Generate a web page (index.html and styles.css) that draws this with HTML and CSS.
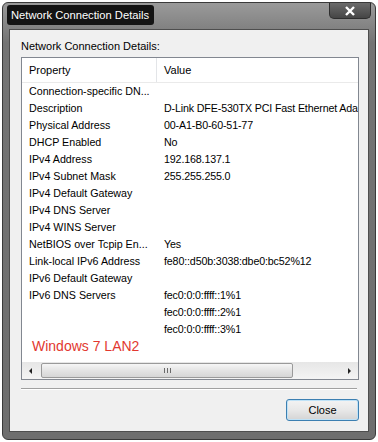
FILE: index.html
```html
<!DOCTYPE html>
<html>
    <head>
        <title>Network Connection Details</title>
        <meta charset="utf-8">
        <link rel="stylesheet" href="styles.css">
    </head>
    <body>
        <div class="window">
            <div class="titlebar">
                <div class="caption">Network Connection Details</div>
                <div class="close-x">
                    <svg width="12" height="10" viewBox="0 0 12 10">
                        <path d="M2 1 L10 9 M10 1 L2 9" stroke="#ffffff" stroke-width="2.4" fill="none"/>
                    </svg>
                </div>
            </div>
            <div class="client">
                <div class="label">Network Connection Details:</div>
                <div class="list">
                    <div class="header">
                        <div class="col-prop">Property</div>
                        <div class="col-val">Value</div>
                    </div>
                    <div class="rows">
                        <div class="row"><div class="col-prop">Connection-specific DN...</div><div class="col-val"></div></div>
                        <div class="row"><div class="col-prop">Description</div><div class="col-val">D-Link DFE-530TX PCI Fast Ethernet Ada</div></div>
                        <div class="row"><div class="col-prop">Physical Address</div><div class="col-val">00-A1-B0-60-51-77</div></div>
                        <div class="row"><div class="col-prop">DHCP Enabled</div><div class="col-val">No</div></div>
                        <div class="row"><div class="col-prop">IPv4 Address</div><div class="col-val">192.168.137.1</div></div>
                        <div class="row"><div class="col-prop">IPv4 Subnet Mask</div><div class="col-val">255.255.255.0</div></div>
                        <div class="row"><div class="col-prop">IPv4 Default Gateway</div><div class="col-val"></div></div>
                        <div class="row"><div class="col-prop">IPv4 DNS Server</div><div class="col-val"></div></div>
                        <div class="row"><div class="col-prop">IPv4 WINS Server</div><div class="col-val"></div></div>
                        <div class="row"><div class="col-prop">NetBIOS over Tcpip En...</div><div class="col-val">Yes</div></div>
                        <div class="row"><div class="col-prop">Link-local IPv6 Address</div><div class="col-val">fe80::d50b:3038:dbe0:bc52%12</div></div>
                        <div class="row"><div class="col-prop">IPv6 Default Gateway</div><div class="col-val"></div></div>
                        <div class="row"><div class="col-prop">IPv6 DNS Servers</div><div class="col-val">fec0:0:0:ffff::1%1</div></div>
                        <div class="row"><div class="col-prop"></div><div class="col-val">fec0:0:0:ffff::2%1</div></div>
                        <div class="row"><div class="col-prop"></div><div class="col-val">fec0:0:0:ffff::3%1</div></div>
                        <div class="row note">Windows 7 LAN2</div>
                    </div>
                    <div class="hscroll">
                        <div class="arrow"><span class="tri-left"></span></div>
                        <div class="track">
                            <div class="thumb"><span class="grip"></span></div>
                        </div>
                        <div class="arrow"><span class="tri-right"></span></div>
                    </div>
                </div>
                <div class="separator"></div>
                <div class="buttons">
                    <div class="btn">Close</div>
                </div>
            </div>
        </div>
    </body>
</html>
```

FILE: styles.css
```css
body{
    margin: 0px;
    padding: 0px;
    background: #ffffff;
    font-family: "Liberation Sans", Arial, sans-serif;
    font-size: 11px;
    color: #000000;
}
.window{
    margin: 2px;
    width: 372px;
    height: 436px;
    border: 1px solid #3a3a3a;
    border-radius: 6px;
    background: linear-gradient(#9a9a9a, #747474 40px, #6e6e6e);
    display: flex;
    flex-direction: column;
}
.titlebar{
    height: 26px;
    display: flex;
    justify-content: space-between;
    align-items: flex-start;
    padding: 0 4px 0 4px;
}
.titlebar .caption{
    margin-top: 2px;
    height: 20px;
    line-height: 20px;
    padding: 0 5px 0 4px;
    background: #141414;
    color: #ffffff;
    font-size: 11.2px;
    border-radius: 3px;
}
.titlebar .close-x{
    width: 40px;
    height: 15px;
    border: 1px solid #2e2e2e;
    border-top: none;
    border-radius: 0 0 5px 5px;
    background: linear-gradient(#6c6c6c, #454545);
    display: flex;
    justify-content: center;
    align-items: center;
}
.client{
    margin: 0 6px 7px 6px;
    flex: 1;
    background: #f0f0f0;
    border: 1px solid #4e4e4e;
    padding: 8px 10px 0 11px;
}
.label{
    line-height: 17px;
    margin-bottom: 2px;
}
.list{
    width: 336px;
    height: 321px;
    border: 1px solid #828790;
    background: #ffffff;
    display: flex;
    flex-direction: column;
    overflow: hidden;
}
.header{
    height: 24px;
    line-height: 24px;
    display: flex;
    border-bottom: 1px solid #eaeaea;
    flex-shrink: 0;
}
.header .col-prop{
    border-right: 1px solid #e3e5e8;
}
.col-prop{
    width: 127px;
    padding-left: 7px;
    white-space: nowrap;
    overflow: hidden;
    flex-shrink: 0;
}
.col-val{
    padding-left: 7px;
    white-space: nowrap;
}
.rows{
    flex: 1;
    font-size: 10.7px;
}
.row{
    height: 17px;
    line-height: 17px;
    display: flex;
}
.row .col-prop{
    width: 128px;
}
.row .col-val{
    letter-spacing: -0.15px;
}
.row.note{
    padding-left: 10px;
    color: #e2382f;
    font-size: 14px;
}
.hscroll{
    height: 17px;
    display: flex;
    background: linear-gradient(#e6e6e6, #f4f4f4);
    flex-shrink: 0;
}
.hscroll .arrow{
    width: 17px;
    display: flex;
    justify-content: center;
    align-items: center;
}
.tri-left{
    border-top: 3px solid transparent;
    border-bottom: 3px solid transparent;
    border-right: 3px solid #222222;
}
.tri-right{
    border-top: 3px solid transparent;
    border-bottom: 3px solid transparent;
    border-left: 3px solid #222222;
}
.hscroll .track{
    flex: 1;
    padding: 1px 2px;
}
.hscroll .thumb{
    width: 250px;
    height: 13px;
    border: 1px solid #9a9a9a;
    border-radius: 2px;
    background: linear-gradient(#f6f6f6, #e4e4e4 50%, #d6d6d6);
    display: flex;
    justify-content: center;
    align-items: center;
}
.grip{
    width: 7px;
    height: 5px;
    background: repeating-linear-gradient(90deg, #6a6a6a 0px, #6a6a6a 1px, transparent 1px, transparent 3px);
}
.separator{
    margin-top: 8px;
    width: 336px;
    border-top: 1px solid #a0a0a0;
    border-bottom: 1px solid #ffffff;
}
.buttons{
    display: flex;
    justify-content: flex-end;
    width: 338px;
    margin-top: 9px;
}
.btn{
    width: 71px;
    height: 20px;
    line-height: 20px;
    text-align: center;
    border: 1px solid #3c7fb1;
    border-radius: 3px;
    background: linear-gradient(#f3f3f3, #e8e8e8 50%, #d4d4d4);
    box-shadow: inset 0 0 0 1px #bfe2f7;
}
```
